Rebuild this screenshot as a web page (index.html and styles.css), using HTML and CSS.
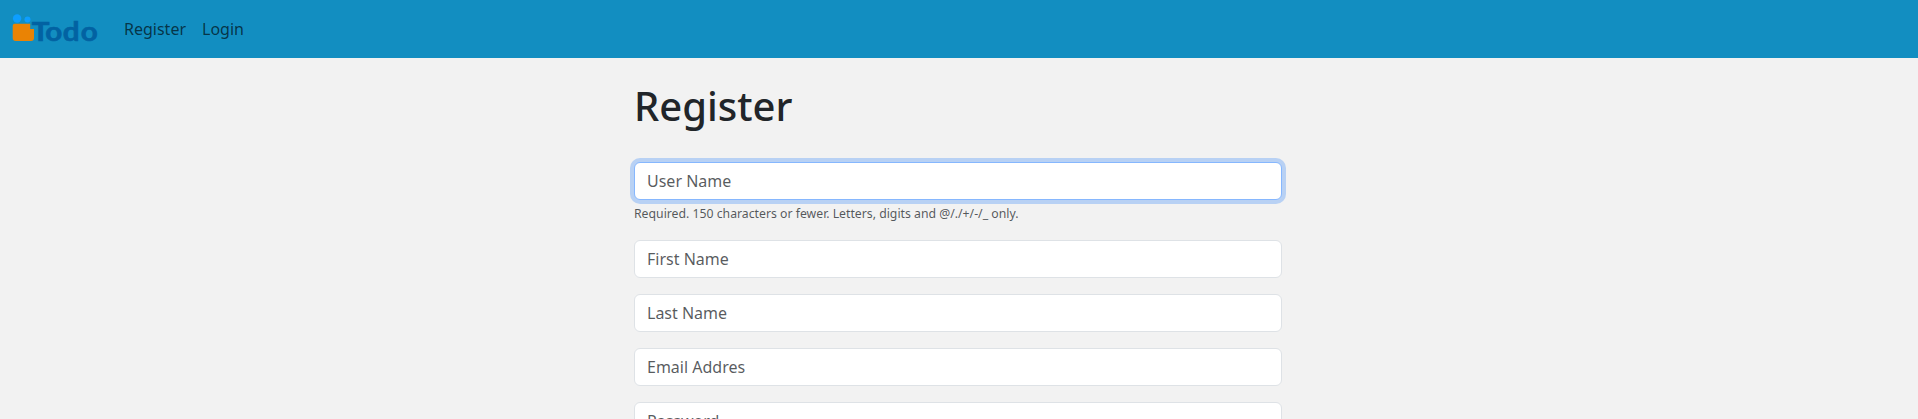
FILE: index.html
```html
<!DOCTYPE html>
<html lang="en">
<head>
<meta charset="utf-8">
<title>Register</title>
<link rel="stylesheet" href="styles.css">
</head>
<body>
<nav class="navbar">
  <a class="brand" href="#" aria-label="Todo">
    <svg class="logo" width="90" height="34" viewBox="0 0 90 34">
      <circle cx="5.1" cy="6.5" r="4.2" fill="#0d9eff"/>
      <circle cx="15.5" cy="7.4" r="3" fill="#0d9eff"/>
      <path d="M2.7 11.8H18.2V17H22V26Q22 29 19 29H3.7Q.7 29 .7 26V13.8Q.7 11.8 2.7 11.8Z" fill="#ea8304"/>
      <text class="logo-text" transform="scale(1.12 1)" x="17.6 29.6 45.4 61.4" y="28.7">Todo</text>
    </svg>
  </a>
  <a class="nav-link" href="#">Register</a>
  <a class="nav-link" href="#">Login</a>
</nav>
<main class="content">
  <h1 class="title">Register</h1>
  <form class="form">
    <div class="field">
      <input class="control focused" type="text" placeholder="User Name">
      <div class="help">Required. 150 characters or fewer. Letters, digits and @/./+/-/_ only.</div>
    </div>
    <div class="field"><input class="control" type="text" placeholder="First Name"></div>
    <div class="field"><input class="control" type="text" placeholder="Last Name"></div>
    <div class="field"><input class="control" type="email" placeholder="Email Addres"></div>
    <div class="field"><input class="control" type="password" placeholder="Password"></div>
  </form>
</main>
</body>
</html>
```
FILE: styles.css
```css
* { box-sizing: border-box; }
html { overflow: hidden; }
body {
  margin: 0;
  height: 100vh;
  overflow: hidden;
  background: #f2f2f2;
  color: #212529;
  font: 16px/1.5 "Noto Sans", "Liberation Sans", sans-serif;
}
.navbar {
  display: flex;
  align-items: center;
  height: 58px;
  padding: 0 12px;
  background: #128ec1;
}
.brand { display: flex; margin-right: 14px; }
.logo { display: block; overflow: visible; }
.logo-text {
  font: 700 26.5px Lato, sans-serif;
  fill: #0262a2;
  stroke: #0262a2;
  stroke-width: 0.6;
}
.nav-link {
  padding: 8px;
  color: rgba(0, 0, 0, 0.65);
  text-decoration: none;
}
.content { width: 650px; margin: 0 auto; padding: 24px 2px 0 0; }
.title { margin: 0 0 32px; font-size: 40px; line-height: 48px; font-weight: 500; }
.field { margin-bottom: 16px; }
.control {
  display: block;
  width: 100%;
  height: 38px;
  padding: 6px 12px;
  border: 1px solid #dee2e6;
  border-radius: 6px;
  background: #fff;
  color: #212529;
  font: inherit;
  outline: 0;
}
.control::placeholder { color: rgba(33, 37, 41, 0.75); opacity: 1; }
.focused { border-color: #86b7fe; box-shadow: 0 0 0 4px rgba(13, 110, 253, 0.25); }
.help { padding-top: 4px; height: 24px; font-size: 12.25px; line-height: 20px; color: rgba(33, 37, 41, 0.75); }
```
